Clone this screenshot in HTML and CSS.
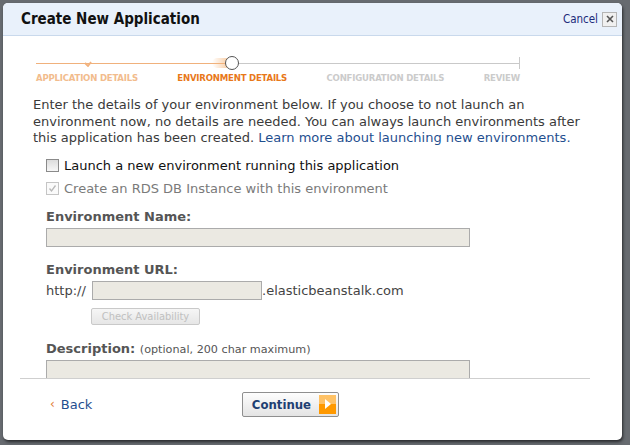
FILE: index.html
```html
<!DOCTYPE html>
<html>
<head>
<meta charset="utf-8">
<link rel="stylesheet" href="styles.css">
</head>
<body>
<div class="dialog">
  <div class="header">
    <div class="title">Create New Application</div>
    <div class="cancel"><span class="cancel-text">Cancel</span><span class="close-box">
      <svg width="8" height="8" viewBox="0 0 8 8"><path d="M1 1L7 7M7 1L1 7" stroke="#555" stroke-width="1.6"/></svg>
    </span></div>
  </div>
  <div class="content">
    <div class="stepper">
      <div class="track">
        <div class="seg done"></div>
        <div class="seg todo"></div>
        <div class="tick"></div>
        <div class="check">
          <svg width="8" height="6" viewBox="0 0 8 6"><path d="M1 2L4 5L7 1" fill="none" stroke="#f2b27d" stroke-width="1.8"/></svg>
        </div>
        <div class="glow"></div>
        <div class="circle"></div>
      </div>
      <div class="labels">
        <span class="lbl past">APPLICATION DETAILS</span>
        <span class="lbl current">ENVIRONMENT DETAILS</span>
        <span class="lbl future">CONFIGURATION DETAILS</span>
        <span class="lbl future">REVIEW</span>
      </div>
    </div>
    <p class="intro">Enter the details of your environment below. If you choose to not launch an environment now, no details are needed. You can always launch environments after this application has been created. <a class="link">Learn more about launching new environments.</a></p>
    <div class="form">
      <label class="check-row"><span class="cb"></span><span>Launch a new environment running this application</span></label>
      <label class="check-row disabled"><span class="cb checked">
        <svg width="9" height="9" viewBox="0 0 9 9"><path d="M1.5 4.5L3.5 7L7.5 1.5" fill="none" stroke="#b8b8b8" stroke-width="1.3"/></svg>
      </span><span>Create an RDS DB Instance with this environment</span></label>
      <div class="field first">
        <div class="field-label">Environment Name:</div>
        <div class="input wide"></div>
      </div>
      <div class="field">
        <div class="field-label">Environment URL:</div>
        <div class="url-row"><span class="proto">http://</span><div class="input short"></div><span>.elasticbeanstalk.com</span></div>
        <div class="check-btn">Check Availability</div>
      </div>
      <div class="field desc">
        <div class="field-label">Description: <span class="hint">(optional, 200 char maximum)</span></div>
        <div class="input wide"></div>
      </div>
    </div>
  </div>
  <div class="footer">
    <a class="back"><span class="chev">‹</span>Back</a>
    <div class="continue"><span>Continue</span><span class="arrow">
      <svg width="10" height="12" viewBox="0 0 10 12"><path d="M2 1L8 6L2 11Z" fill="#fff"/></svg>
    </span></div>
  </div>
</div>
</body>
</html>
```
FILE: styles.css
```css
html, body {
  margin: 0;
  padding: 0;
}
body {
  width: 630px;
  height: 445px;
  overflow: hidden;
  background: #676b70;
  font-family: "DejaVu Sans", sans-serif;
}
.dialog {
  margin: 3px 0 0 3px;
  width: 619px;
  height: 437px;
  background: #fff;
  border-radius: 5px;
  box-shadow: 1px 2px 3px #2a2c2f;
  display: flex;
  flex-direction: column;
  overflow: hidden;
}
.header {
  height: 32px;
  flex: none;
  background: #e9f1fb;
  border-bottom: 1px solid #c9d9ec;
  display: flex;
  align-items: center;
  justify-content: space-between;
  padding: 0 5px 0 18px;
}
.title {
  font-family: "DejaVu Sans Condensed", "DejaVu Sans", sans-serif;
  font-weight: bold;
  font-size: 15px;
  color: #111;
}
.cancel {
  display: flex;
  align-items: center;
  gap: 4px;
}
.cancel-text {
  font-family: "DejaVu Sans Condensed", "DejaVu Sans", sans-serif;
  font-size: 11.5px;
  color: #1c2a7a;
}
.close-box {
  width: 13px;
  height: 13px;
  border: 1px solid #b5b5b5;
  background: #f0f0f0;
  display: flex;
  align-items: center;
  justify-content: center;
}
.content {
  height: 342px;
  flex: none;
  overflow: hidden;
  border-bottom: 1px solid #cfcfcf;
  margin: 0 32px 0 17px;
  padding-left: 13px;
}
.stepper {
  margin: 19px 0 0 3px;
  width: 484px;
}
.track {
  position: relative;
  height: 16px;
  display: flex;
  align-items: center;
}
.seg {
  height: 1px;
}
.seg.done {
  width: 190px;
  background: #f0b17c;
}
.seg.todo {
  flex: 1;
  background: #c9c9c9;
}
.tick {
  position: absolute;
  right: 0;
  top: 2px;
  width: 1px;
  height: 12px;
  background: #c9c9c9;
}
.check {
  position: absolute;
  left: 48px;
  top: -3px;
}
.glow {
  position: absolute;
  left: 176px;
  top: 3px;
  width: 22px;
  height: 10px;
  background: linear-gradient(to right, rgba(245,190,140,0), rgba(245,180,120,0.9));
  border-radius: 5px 0 0 5px;
}
.circle {
  position: absolute;
  left: 189px;
  top: 1px;
  width: 12px;
  height: 12px;
  border: 1.5px solid #555;
  border-radius: 50%;
  background: #fff;
}
.labels {
  display: flex;
  justify-content: space-between;
  margin-top: 1px;
  font-family: "DejaVu Sans Condensed", "DejaVu Sans", sans-serif;
}
.lbl {
  font-weight: bold;
  font-size: 9.5px;
  letter-spacing: -0.2px;
}
.lbl.past { color: #f2bc8d; }
.lbl.current { color: #e8781a; }
.lbl.future { color: #cbcbcb; }
.intro {
  margin: 14px 0 0 0;
  font-size: 13px;
  line-height: 16.5px;
  color: #3a3a3a;
  width: 560px;
}
.link {
  color: #1f4f8f;
}
.form {
  margin: 11px 0 0 13px;
}
.check-row {
  display: flex;
  align-items: center;
  gap: 5px;
  font-size: 13px;
  color: #111;
  height: 16px;
  margin-bottom: 7px;
}
.check-row.disabled {
  color: #7a7a7a;
}
.cb {
  width: 11px;
  height: 11px;
  border: 1px solid #8a8a8a;
  background: linear-gradient(#dcdcdc, #f7f7f7);
  display: flex;
  align-items: center;
  justify-content: center;
}
.cb.checked {
  border-color: #c5c5c5;
  background: #fafafa;
}
.field {
  margin-top: 15px;
}
.field.first {
  margin-top: 12px;
}
.field.desc {
  margin-top: 16px;
}
.field-label {
  font-weight: bold;
  font-size: 13px;
  color: #555;
  height: 16px;
  margin-bottom: 3px;
}
.hint {
  font-weight: normal;
  font-size: 11.2px;
  color: #555;
}
.input {
  height: 17px;
  background: #ebe9e2;
  border: 1px solid #ababab;
}
.input.wide {
  width: 422px;
}
.input.short {
  width: 168px;
}
.url-row {
  display: flex;
  align-items: center;
  font-size: 13px;
  color: #444;
}
.proto {
  width: 46px;
}
.check-btn {
  margin: 8px 0 0 45px;
  width: 107px;
  height: 15px;
  border: 1px solid #c9c9c9;
  border-radius: 2px;
  background: linear-gradient(#f6f6f6, #e6e6e6);
  color: #c0c0c0;
  font-family: "DejaVu Sans Condensed", "DejaVu Sans", sans-serif;
  font-size: 11px;
  display: flex;
  align-items: center;
  justify-content: center;
}
.footer {
  display: flex;
  align-items: center;
  height: 50px;
  padding-left: 47px;
}
.back {
  font-size: 13px;
  color: #1f4f8f;
  display: flex;
  align-items: center;
  width: 192px;
}
.chev {
  color: #e07a2e;
  margin-right: 6px;
  font-size: 12px;
}
.continue {
  width: 93px;
  height: 23px;
  border: 1px solid #8f8f8f;
  border-radius: 2px;
  background: linear-gradient(#fdfdfd, #e4e4e4);
  display: flex;
  align-items: center;
  justify-content: flex-end;
  gap: 8px;
  padding-right: 2px;
  box-sizing: content-box;
}
.continue span:first-child {
  font-family: "DejaVu Sans Condensed", "DejaVu Sans", sans-serif;
  font-weight: bold;
  font-size: 13px;
  color: #1e3f73;
}
.arrow {
  width: 17px;
  height: 19px;
  background: linear-gradient(#ffc266 0 50%, #ff9900 50%);
  display: flex;
  align-items: center;
  justify-content: center;
}
```
